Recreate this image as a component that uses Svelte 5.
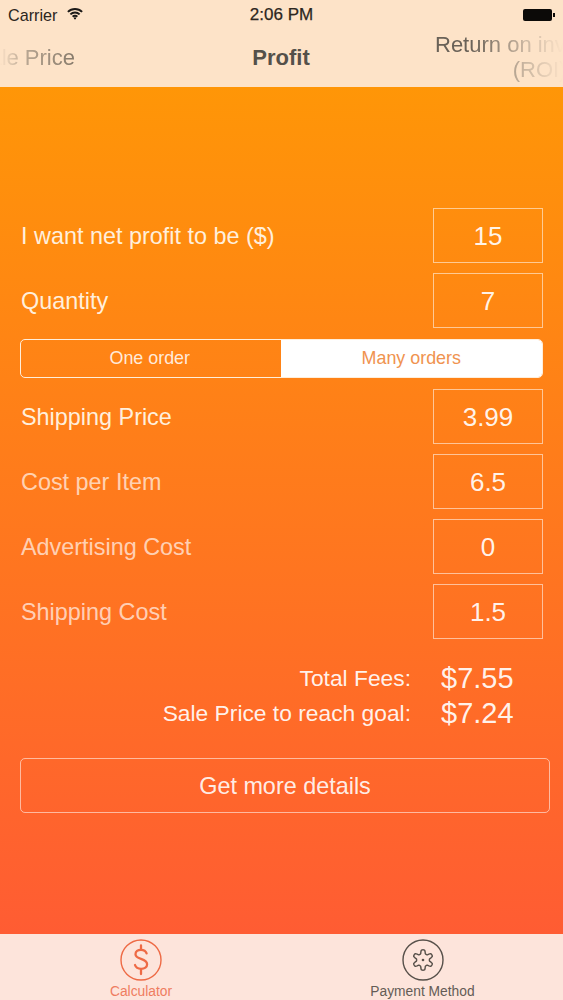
<script>
	const topFields = [
		{ label: 'I want net profit to be ($)', value: '15' },
		{ label: 'Quantity', value: '7' }
	];
	const costFields = [
		{ label: 'Shipping Price', value: '3.99', dim: false },
		{ label: 'Cost per Item', value: '6.5', dim: true },
		{ label: 'Advertising Cost', value: '0', dim: true },
		{ label: 'Shipping Cost', value: '1.5', dim: true }
	];

	// six soft lobes, one pointing straight up
	function gearPath() {
		const pts = [];
		for (let i = 0; i < 72; i++) {
			const a = (i / 72) * Math.PI * 2;
			const r = 8.3 + 1.9 * Math.max(-0.6, Math.min(0.6, Math.cos(a * 6))) / 0.6;
			pts.push((21 + r * Math.sin(a)).toFixed(2) + ' ' + (21 - r * Math.cos(a)).toFixed(2));
		}
		return 'M' + pts.join('L') + 'Z';
	}
</script>

<div class="screen">
	<header class="top">
		<div class="status">
			<span class="carrier">Carrier</span>
			<svg class="wifi" width="16" height="13" viewBox="0 0 18 14">
				<path d="M1 5.2a11.4 11.4 0 0 1 16 0" />
				<path d="M3.8 8a7.4 7.4 0 0 1 10.4 0" />
				<path d="M6.4 10.6a3.6 3.6 0 0 1 5.2 0" />
				<circle cx="9" cy="12.4" r="1.3" />
			</svg>
			<span class="clock">2:06 PM</span>
			<span class="battery"></span>
		</div>
		<nav class="titles">
			<div class="title side left"><span>Sale Price</span></div>
			<div class="title current">Profit</div>
			<div class="title side right"><span>Return on investment<br />(ROI)</span></div>
		</nav>
	</header>

	<main class="form">
		{#each topFields as f}
			<div class="row">
				<span class="label">{f.label}</span>
				<span class="box">{f.value}</span>
			</div>
		{/each}

		<div class="segments">
			<span class="seg">One order</span>
			<span class="seg on">Many orders</span>
		</div>

		{#each costFields as f}
			<div class="row">
				<span class="label" class:dim={f.dim}>{f.label}</span>
				<span class="box">{f.value}</span>
			</div>
		{/each}

		<dl class="totals">
			<dt>Total Fees:</dt>
			<dd>$7.55</dd>
			<dt>Sale Price to reach goal:</dt>
			<dd>$7.24</dd>
		</dl>

		<button class="details">Get more details</button>
	</main>

	<footer class="tabs">
		<div class="tab active">
			<svg width="42" height="42" viewBox="0 0 42 42">
				<circle cx="21" cy="21" r="20" />
				<path d="M26.6 14.4c-.8-2.3-2.8-3.6-5.6-3.6-3.2 0-5.5 1.8-5.5 4.4 0 6 11.6 3.2 11.6 10 0 2.8-2.5 4.6-6 4.6-3 0-5.3-1.4-6.1-3.8" />
				<path d="M21 6.5v4.3M21 30.8v4.2" />
			</svg>
			<span>Calculator</span>
		</div>
		<div class="tab">
			<svg width="42" height="42" viewBox="0 0 42 42">
				<circle cx="21" cy="21" r="20" />
				<path d={gearPath()} />
				<circle class="hub" cx="21" cy="21" r="1.3" />
			</svg>
			<span>Payment Method</span>
		</div>
	</footer>
</div>

<style>
	:global(body) {
		background: #fde3c8;
	}

	.screen {
		width: 563px;
		height: 1000px;
		display: flex;
		flex-direction: column;
		overflow: hidden;
		font-family: "Liberation Sans", Arial, sans-serif;
	}

	.top {
		height: 87px;
		flex: none;
		background: #fde3c8;
		color: #2c2620;
	}

	.status {
		height: 30px;
		position: relative;
		display: flex;
		align-items: center;
		padding: 0 11px 0 8px;
		font-size: 16.2px;
	}

	.wifi {
		margin-left: 10px;
		margin-top: -3px;
	}
	.wifi path {
		fill: none;
		stroke: #1c1a18;
		stroke-width: 2.2;
	}
	.wifi circle {
		fill: #1c1a18;
	}

	.clock {
		position: absolute;
		left: 0;
		right: 0;
		text-align: center;
		font-size: 17px;
		-webkit-text-stroke: 0.25px #2c2620;
	}

	.battery {
		margin-left: auto;
		width: 29px;
		height: 12px;
		background: #0c0a08;
		border-radius: 2px;
		position: relative;
	}
	.battery::after {
		content: '';
		position: absolute;
		right: -3px;
		top: 4px;
		width: 2px;
		height: 4px;
		background: #0c0a08;
	}

	.titles {
		height: 57px;
		margin-top: -1px;
		display: grid;
		grid-template-columns: 75px 148px 116px 96px 128px;
		align-items: center;
	}

	.title {
		font-size: 22px;
		color: #5a5148;
		overflow: hidden;
		white-space: nowrap;
	}

	.current {
		grid-column: 3;
		font-weight: 700;
		text-align: center;
		color: #54504a;
	}

	.side.left {
		grid-column: 1;
		display: flex;
		justify-content: flex-end;
		-webkit-mask-image: linear-gradient(to right, transparent 0, rgba(0, 0, 0, 0.55) 30%, #000 100%);
		mask-image: linear-gradient(to right, transparent 0, rgba(0, 0, 0, 0.55) 30%, #000 100%);
		color: #85796a;
	}

	.side.right {
		grid-column: 5;
		line-height: 25px;
		margin-top: -2px;
		color: #6a6258;
		-webkit-mask-image: linear-gradient(to right, #000 30%, rgba(0, 0, 0, 0.35) 70%, transparent 100%);
		mask-image: linear-gradient(to right, #000 30%, rgba(0, 0, 0, 0.35) 70%, transparent 100%);
	}
	.side.right span {
		display: inline-block;
		text-align: center;
	}

	.form {
		flex: 1;
		min-height: 0;
		background: linear-gradient(to bottom, #ff9607, #ff5c33);
		padding: 121px 20px 0 20px;
		display: flex;
		flex-direction: column;
		gap: 10px;
		color: #fff;
	}

	.row {
		height: 55px;
		display: flex;
		align-items: center;
		justify-content: space-between;
	}

	.label {
		font-size: 23.4px;
		color: #ffefdc;
		padding: 1px 0 0 1px;
	}
	.label.dim {
		color: rgba(255, 255, 255, 0.68);
	}

	.box {
		width: 110px;
		height: 55px;
		box-sizing: border-box;
		border: 1px solid rgba(255, 255, 255, 0.55);
		padding-top: 1px;
		display: flex;
		align-items: center;
		justify-content: center;
		font-size: 26px;
		color: rgba(255, 255, 255, 0.92);
	}

	.segments {
		height: 39px;
		margin: 1px 0;
		box-sizing: border-box;
		border: 1.5px solid #ffeeda;
		border-radius: 5px;
		display: grid;
		grid-template-columns: 259.5px 1fr;
		overflow: hidden;
		font-size: 17.9px;
	}
	.seg {
		display: flex;
		align-items: center;
		justify-content: center;
		padding-right: 2px;
		color: rgba(255, 255, 255, 0.85);
	}
	.seg.on {
		background: #fff;
		padding-right: 0;
		color: #f0934f;
	}

	.totals {
		margin: 12px 0 0 0;
		display: grid;
		grid-template-columns: 391px auto;
		column-gap: 30px;
		align-items: center;
	}
	.totals dt {
		text-align: right;
		font-size: 22.8px;
		line-height: 35px;
		color: rgba(255, 255, 255, 0.92);
	}
	.totals dd {
		margin: 0;
		font-size: 29px;
		line-height: 35px;
		color: rgba(255, 255, 255, 0.92);
	}

	.details {
		margin-top: 17px;
		width: 530px;
		height: 55px;
		background: none;
		border: 1px solid rgba(255, 255, 255, 0.55);
		border-radius: 5px;
		font: inherit;
		font-size: 23.4px;
		color: rgba(255, 255, 255, 0.9);
		padding: 1px 0 0;
	}

	.tabs {
		height: 66px;
		flex: none;
		background: #fde4db;
		display: grid;
		grid-template-columns: 282px 281px;
	}

	.tab {
		display: flex;
		flex-direction: column;
		align-items: center;
		padding-top: 5px;
		color: #645c56;
		font-size: 13.8px;
	}
	.tab svg {
		margin-bottom: 3px;
		fill: none;
		stroke: #57504a;
		stroke-width: 1.4;
		stroke-linejoin: round;
		stroke-linecap: round;
	}
	.tab .hub {
		fill: #57504a;
		stroke: none;
	}
	.tab.active {
		color: #ef7c60;
	}
	.tab.active svg {
		stroke: #ee6a45;
	}
	.tab.active svg path {
		stroke-width: 2.3;
	}
</style>
